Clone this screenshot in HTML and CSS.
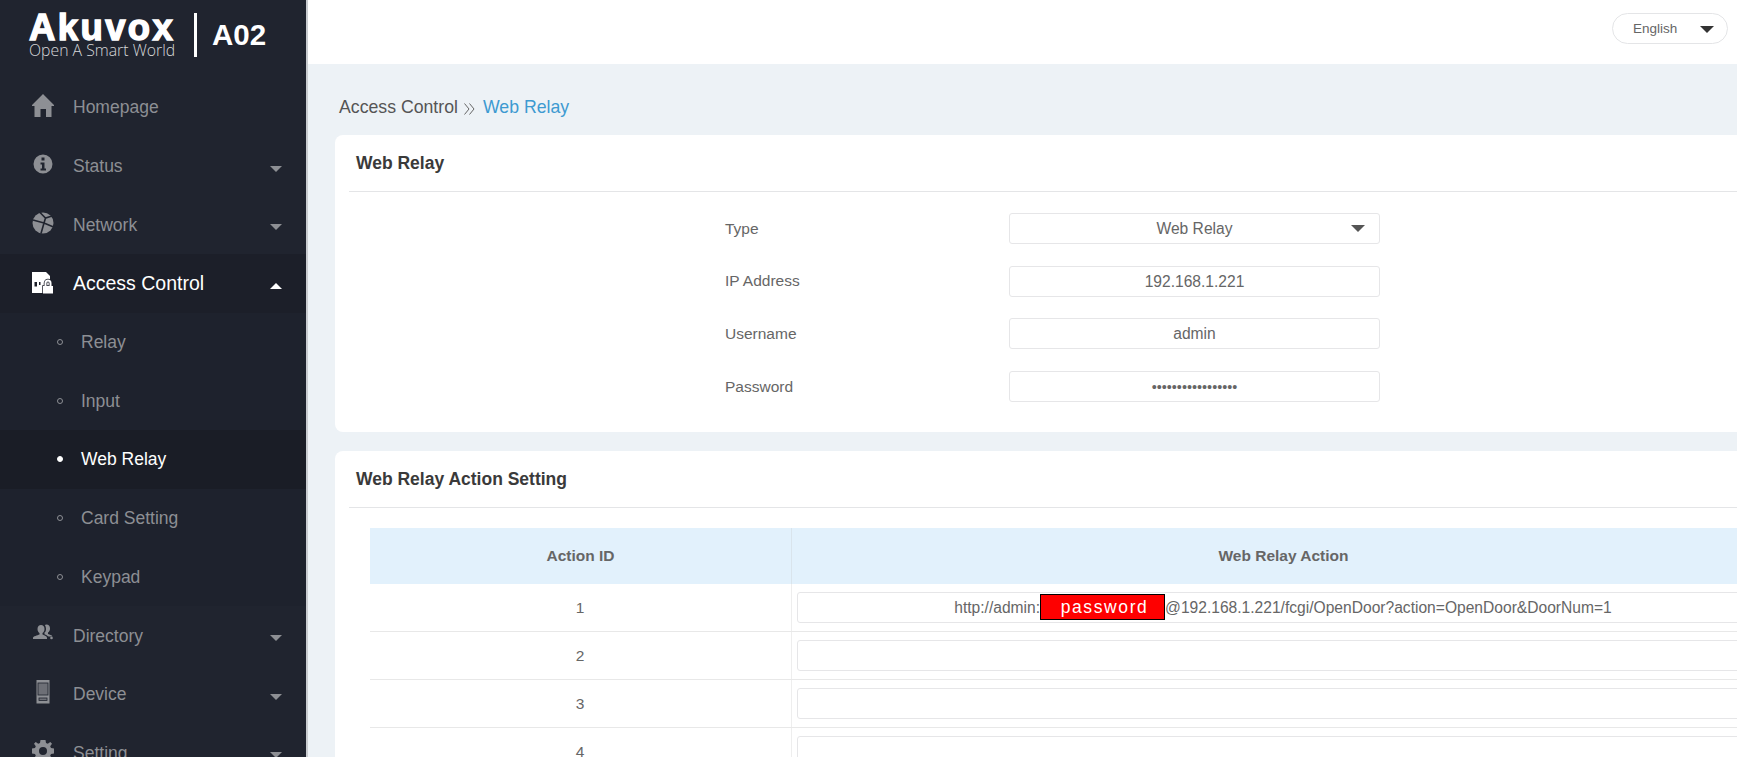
FILE: index.html
```html
<!DOCTYPE html>
<html lang="en">
<head>
    <meta charset="UTF-8">
    <title>Web Relay</title>
    <link rel="stylesheet" href="styles.css">
</head>
<body>
    <div class="sidebar">
        <div class="logo">
            <div class="brand">
                <div class="brand-name">Akuvox</div>
                <div class="brand-tag">Open A Smart World</div>
            </div>
            <div class="model">A02</div>
        </div>

        <div class="menu-item">
            <svg class="menu-icon" viewBox="0 0 22 22"><path d="M11 0 L0 11 L0 12 L2.500 12 L2.500 23 L8.500 23 L8.500 15 L14 15 L14 23 L19.500 23 L19.500 12 L22 12 L22 11 Z"/></svg>
            <span>Homepage</span>
        </div>
        <div class="menu-item">
            <svg class="menu-icon" viewBox="0 0 22 22"><path fill-rule="evenodd" d="M11 1.500 A9.500 9.500 0 1 0 11 20.500 A9.500 9.500 0 1 0 11 1.500 Z M9.500 4.500 H12.500 V7.500 H9.500 Z M8.500 9.500 H12.500 V15.500 H14 V17.500 H8.500 V15.500 H10 V11.500 H8.500 Z"/></svg>
            <span>Status</span>
            <i class="caret"></i>
        </div>
        <div class="menu-item">
            <svg class="menu-icon" viewBox="0 0 22 22"><circle cx="11" cy="11" r="10.500"/><path class="icon-cut" d="M1 8 L12 11 L21.500 15 M12 11 L9 21.500 M8 0.500 L13.500 6 L20 4 M13.500 6 L12 11"/></svg>
            <span>Network</span>
            <i class="caret"></i>
        </div>
        <div class="menu-item open">
            <svg class="menu-icon" viewBox="0 0 22 22"><path d="M0 0 H14 L18 4 V21 H0 Z"/><path class="icon-slot" d="M2.500 10 H5 V14.500 H2.500 Z M7 10 H8.500 V13 H7 Z"/><path class="icon-lock" d="M11 21.500 V14 H12.500 V11 A3.500 3.500 0 0 1 19.500 11 V14 H21 V21.500 Z M14.500 14 H17.500 V11 A1.500 1.500 0 0 0 14.500 11 Z"/></svg>
            <span>Access Control</span>
            <i class="caret up"></i>
        </div>
        <div class="submenu">
            <div class="sub-item"><i class="dot"></i><span>Relay</span></div>
            <div class="sub-item"><i class="dot"></i><span>Input</span></div>
            <div class="sub-item active"><i class="dot"></i><span>Web Relay</span></div>
            <div class="sub-item"><i class="dot"></i><span>Card Setting</span></div>
            <div class="sub-item"><i class="dot"></i><span>Keypad</span></div>
        </div>
        <div class="menu-item">
            <svg class="menu-icon" viewBox="0 0 22 22"><path d="M9 2 C11 2 12.500 3.500 12.500 6 C12.500 8 11.500 9.500 10.500 10 V11.500 C12.500 12.500 15 13 15 15 V16 H1 V15 C1 13 5.500 12.500 7.500 11.500 V10 C6.500 9.500 5.500 8 5.500 6 C5.500 3.500 7 2 9 2 Z"/><path d="M14.500 1.500 C16.500 1.500 18 3 18 5.500 C18 7.500 17 9 16 9.500 V11 C17.500 11.800 20 12 20.500 13.500 H16.500 C15.500 12.500 14 12 12.500 11.200 V9.500 C13.500 9 14 7.500 14 6 C14 4.500 13.500 3 12.800 2 C13.300 1.700 13.800 1.500 14.500 1.500 Z"/><circle cx="19.500" cy="15" r="1.300"/></svg>
            <span>Directory</span>
            <i class="caret"></i>
        </div>
        <div class="menu-item">
            <svg class="menu-icon" viewBox="0 0 22 22"><rect x="4.500" y="-1" width="13" height="23.500"/><rect class="icon-screen" x="6" y="2" width="10" height="12"/><rect class="icon-screen" x="7" y="17" width="8" height="2.500"/></svg>
            <span>Device</span>
            <i class="caret"></i>
        </div>
        <div class="menu-item">
            <svg class="menu-icon" viewBox="0 0 22 22"><path fill-rule="evenodd" d="M8.500 0 H13.500 L14 3 L15.800 3.800 L18.300 2 L20 3.700 L18.200 6.200 L19 8 L22 8.500 V13.500 L19 14 L18.200 15.800 L20 18.300 L18.300 20 L15.800 18.200 L14 19 L13.500 22 H8.500 L8 19 L6.200 18.200 L3.700 20 L2 18.300 L3.800 15.800 L3 14 L0 13.500 V8.500 L3 8 L3.800 6.200 L2 3.700 L3.700 2 L6.200 3.800 L8 3 Z M11 7 A4 4 0 1 0 11 15 A4 4 0 1 0 11 7 Z"/></svg>
            <span>Setting</span>
            <i class="caret"></i>
        </div>
    </div>

    <div class="main">
        <div class="topbar">
            <div class="lang">
                <span>English</span>
                <i class="lang-caret"></i>
            </div>
        </div>

        <div class="content">
            <div class="breadcrumb">
                <span>Access Control</span>
                <svg class="crumb-sep" viewBox="0 0 11 12"><path d="M0.500 0.500 L5 6 L0.500 11.500 M5.500 0.500 L10 6 L5.500 11.500"/></svg>
                <span class="crumb-current">Web Relay</span>
            </div>

            <div class="card first">
                <div class="card-title">Web Relay</div>
                <div class="form">
                    <label>Type</label>
                    <div class="field">Web Relay<i class="select-caret"></i></div>
                    <label>IP Address</label>
                    <div class="field">192.168.1.221</div>
                    <label>Username</label>
                    <div class="field">admin</div>
                    <label>Password</label>
                    <div class="field dots">•••••••••••••••••</div>
                </div>
            </div>

            <div class="card">
                <div class="card-title">Web Relay Action Setting</div>
                <table class="action-table">
                    <thead>
                        <tr><th class="col-id">Action ID</th><th>Web Relay Action</th></tr>
                    </thead>
                    <tbody>
                        <tr>
                            <td>1</td>
                            <td><div class="field url">http://admin:<span class="redact">password</span>@192.168.1.221/fcgi/OpenDoor?action=OpenDoor&amp;DoorNum=1</div></td>
                        </tr>
                        <tr><td>2</td><td><div class="field"></div></td></tr>
                        <tr><td>3</td><td><div class="field"></div></td></tr>
                        <tr><td>4</td><td><div class="field"></div></td></tr>
                    </tbody>
                </table>
            </div>
        </div>
    </div>
</body>
</html>
```

FILE: styles.css
```css
html, body {
    margin: 0;
    height: 100%;
    overflow: hidden;
}
body {
    display: flex;
    font-family: "Liberation Sans", Arial, sans-serif;
    background: #edf2f6;
    color: #666;
}

/* sidebar */
.sidebar {
    flex: none;
    width: 306px;
    height: 757px;
    overflow: hidden;
    background: #20242f;
    border-right: 2px solid #c9ccd0;
    color: #8d8f94;
    font-size: 17.5px;
}
.logo {
    display: flex;
    align-items: center;
    height: 78px;
    padding-left: 29px;
    box-sizing: border-box;
    color: #fff;
}
.brand {
    width: 147px;
    padding-right: 18px;
    margin-right: 15px;
    border-right: 3px solid #fff;
    height: 44px;
    margin-top: -8px;
}
.brand-name {
    font-size: 36.5px;
    font-weight: bold;
    line-height: 30px;
    letter-spacing: 2.4px;
    margin-top: 0;
    -webkit-text-stroke: 1.4px #fff;
}
.brand-tag {
    font-family: "Open Sans", "Liberation Sans", sans-serif;
    font-size: 15.8px;
    font-weight: 300;
    line-height: 12px;
    margin-top: 1px;
    white-space: nowrap;
    color: #d6d7d9;
}
.model {
    font-size: 29.5px;
    font-weight: bold;
    margin-top: -8px;
}
.menu-item {
    display: flex;
    align-items: center;
    height: 58.7px;
    padding-left: 32px;
    padding-right: 24px;
}
.menu-item span {
    flex: 1;
    margin-left: 19px;
    padding-top: 1px;
}
.menu-item.open {
    background: #1c1f29;
    color: #fff;
    font-size: 19.5px;
}
.menu-icon {
    flex: none;
    width: 22px;
    height: 22px;
    fill: #8d8f94;
    overflow: visible;
    margin-top: -4px;
}
.open .menu-icon {
    fill: #fff;
    margin-top: 0;
}
.icon-cut {
    fill: none;
    stroke: #20242f;
    stroke-width: 1.6;
}
.icon-slot {
    fill: #1c1f29;
}
.open .icon-lock {
    fill-rule: evenodd;
    stroke: #1c1f29;
    stroke-width: 1.5;
    paint-order: stroke;
}
.icon-screen {
    fill: #6d6f76;
    stroke: #20242f;
    stroke-width: 0.8;
}
.caret {
    width: 0;
    height: 0;
    margin-top: 5px;
    border-left: 6px solid transparent;
    border-right: 6px solid transparent;
    border-top: 6px solid #8d8f94;
}
.caret.up {
    border-top: 0;
    border-bottom: 6px solid #fff;
}
.submenu {
    background: #1e222d;
}
.sub-item {
    display: flex;
    align-items: center;
    height: 58.7px;
    padding-left: 57px;
}
.sub-item span {
    margin-left: 18px;
    padding-top: 1px;
}
.dot {
    width: 6px;
    height: 6px;
    box-sizing: border-box;
    border: 1.5px solid #8d8f94;
    border-radius: 50%;
}
.sub-item.active {
    background: #1a1d26;
    color: #fff;
}
.sub-item.active .dot {
    background: #fff;
    border-color: #fff;
}

/* top bar */
.main {
    flex: 1;
    min-width: 0;
}
.topbar {
    display: flex;
    justify-content: flex-end;
    align-items: center;
    height: 64px;
    padding: 0 9px 8px 0;
    box-sizing: border-box;
    background: #fff;
}
.lang {
    display: flex;
    align-items: center;
    justify-content: space-between;
    width: 116px;
    height: 31px;
    box-sizing: border-box;
    padding: 0 13px 0 20px;
    border: 1px solid #e4e5e7;
    border-radius: 16px;
    font-size: 13.5px;
    color: #666;
}
.lang-caret {
    width: 0;
    height: 0;
    margin-top: 3px;
    border-left: 7px solid transparent;
    border-right: 7px solid transparent;
    border-top: 7px solid #333;
}

/* content */
.content {
    width: 1476px;
    padding-left: 27px;
}
.breadcrumb {
    display: flex;
    align-items: center;
    height: 71px;
    box-sizing: border-box;
    padding: 16px 0 0 4px;
    font-size: 17.7px;
    color: #555;
}
.crumb-sep {
    width: 11px;
    height: 12px;
    margin: 2px 8px 0 6px;
    fill: none;
    stroke: #666;
    stroke-width: 1;
}
.crumb-current {
    color: #3d9ad1;
}
.card {
    background: #fff;
    border-radius: 8px;
    padding: 0 14px;
    margin-bottom: 19px;
}
.card.first {
    height: 297px;
}
.card-title {
    height: 56px;
    line-height: 56px;
    padding-left: 7px;
    border-bottom: 1px solid #e4e5e7;
    font-size: 17.5px;
    font-weight: bold;
    color: #3a3a3a;
}
.form {
    display: grid;
    grid-template-columns: 284px 371px;
    grid-auto-rows: 31px;
    row-gap: 21.7px;
    align-items: center;
    padding: 21px 0 0 376px;
    font-size: 15.5px;
}
.field {
    position: relative;
    height: 31px;
    line-height: 30px;
    box-sizing: border-box;
    border: 1px solid #e6e6e8;
    border-radius: 3px;
    text-align: center;
    font-size: 15.6px;
    color: #666;
    background: #fff;
}
.select-caret {
    position: absolute;
    right: 14px;
    top: 11px;
    border-left: 7px solid transparent;
    border-right: 7px solid transparent;
    border-top: 7px solid #555;
}
.dots {
    font-size: 14.4px;
}

/* action table */
.action-table {
    width: 1406px;
    margin: 20px 0 0 21px;
    border-collapse: collapse;
    table-layout: fixed;
}
.action-table th {
    height: 56px;
    padding: 0;
    background: #e2f1fc;
    border-right: 1px solid #d9e4ec;
    font-size: 15.5px;
    color: #666;
}
.action-table .col-id {
    width: 421px;
}
.action-table td {
    height: 48px;
    padding: 1px 6px 0 5px;
    box-sizing: border-box;
    border-bottom: 1px solid #e8e8e8;
    border-right: 1px solid #eee;
    text-align: center;
    font-size: 15.5px;
    color: #666;
}
.action-table tbody tr:first-child td {
    height: 47px;
}
.url {
    white-space: nowrap;
}
.redact {
    display: inline-block;
    width: 125px;
    height: 26px;
    line-height: 24px;
    box-sizing: border-box;
    vertical-align: top;
    margin-top: 1px;
    border: 1px solid #000;
    background: #fe0000;
    color: #fff;
    font-size: 17.5px;
    letter-spacing: 1.6px;
    padding-left: 4px;
}
```
